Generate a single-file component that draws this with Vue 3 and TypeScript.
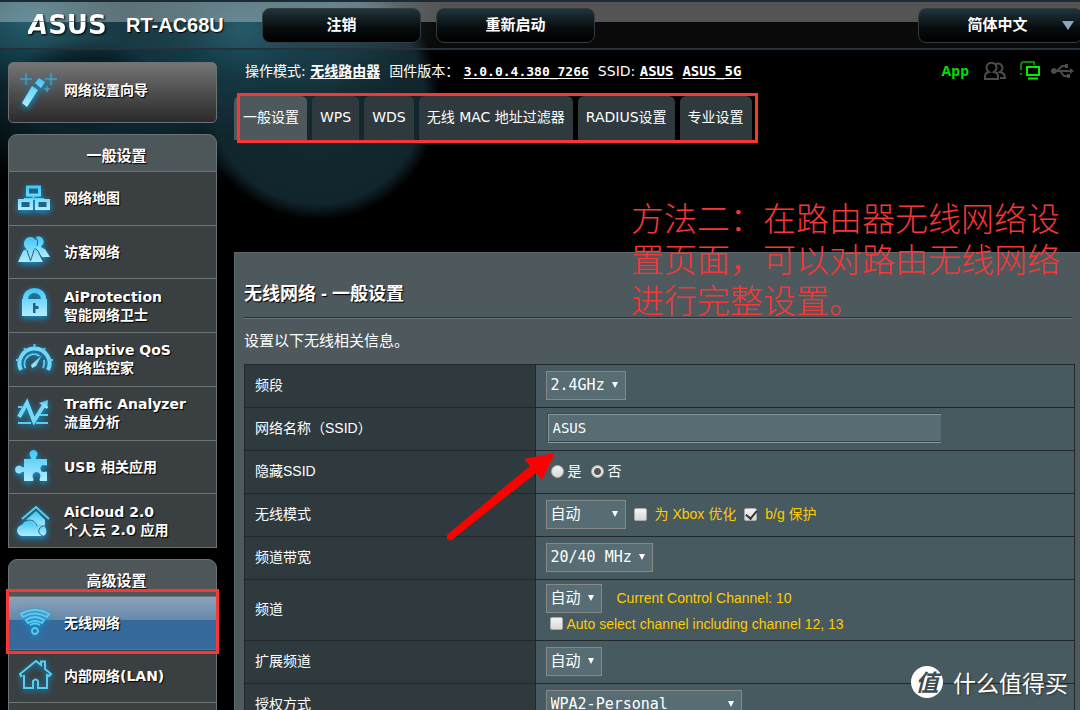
<script setup lang="ts">
import { ref } from 'vue'

interface Shape {
  d: string
  kind: 'fill' | 'line' | 'bold' | 'dark' | 'thin' | 'spark'
}
interface MenuItem {
  icon: string
  lines: string[]
  active?: boolean
}

const icons: Record<string, Shape[]> = {
  map: [
    { d: 'M17.500 16v4M9 22v-3h18v3', kind: 'line' },
    { d: 'M10 5.500h15v11h-15zM2 19h15v11H2zM19 19h15v11H19z', kind: 'fill' },
    { d: 'M13 8.500h9v5h-9zM5.500 22h8v5h-8zM22.500 22h8v5h-8z', kind: 'dark' },
  ],
  guests: [
    { d: 'M20 3a5 5 0 1 1 5 9l1 2 3 1 5 8h-8l-5-7-2-2z', kind: 'fill' },
    { d: 'M14.500 3a6.500 6.500 0 0 1 3 12l4 1.500L27 28H2l5-11 4-2a6.500 6.500 0 0 1 3.500-12z', kind: 'fill' },
    { d: 'M11 16l3.500 11L18 16M20 15l2 2 5 10M20 4q3 3 1 8', kind: 'thin' },
  ],
  lock: [
    { d: 'M6 11h1v-1a11.500 10 0 0 1 23 0v1h1v17H6zM12 11h13a6.500 6 0 0 0-13 0z', kind: 'fill' },
    { d: 'M17 15h2.500v3h3v3h-3v4H17z', kind: 'dark' },
  ],
  gauge: [
    { d: 'M5 29a15 15 0 1 1 27 0', kind: 'bold' },
    { d: 'M18.500 3v4M8 7l2 3M29 7l-2 3M0 19h4M37 19h-4', kind: 'line' },
    { d: 'M9.500 27a9.500 9.500 0 0 1 14-12M28 19q1 4-1 8', kind: 'line' },
    { d: 'M26 14L15 24l1 3 4-2z', kind: 'fill' },
  ],
  traffic: [
    { d: 'M2 28h13M20 28h12M2 20h3M23 20h9M2 12h4M27 12h5', kind: 'line' },
    { d: 'M3 22L11 8l7 18 10-16', kind: 'bold' },
    { d: 'M23 8l9-3-1 9z', kind: 'fill' },
  ],
  puzzle: [
    { d: 'M8 10h7q1-1-1-3a4 4 0 1 1 7 0q-2 2-1 3h11v6q-1 1-3 0a3.500 3.500 0 0 0 0 7q2-1 3 0v9h-7q-1-1 0-3a4 4 0 1 0-7 0q1 2 0 3H8v-9q-1-1-3 1a4 4 0 1 1 0-7q2 2 3 1z', kind: 'fill' },
  ],
  cloud: [
    { d: 'M6 16L20 4l13 12', kind: 'line' },
    { d: 'M10 17L20 8l9 9v9H10z', kind: 'fill' },
    { d: 'M7 33a5.500 5.500 0 0 1-1-11 6 6 0 0 1 6-4c4 0 7 2 8 5a5 5 0 1 1 8 10z', kind: 'fill' },
    { d: 'M6 21q2-4 7-4 6 0 8 6M31 24a5 5 0 1 0 0 8', kind: 'thin' },
  ],
  wifi: [
    { d: 'M5 9q14-8 28 0l-2 3q-12-7-24 0zM10 15q9-6 18 0l-2 3q-7-4-14 0z', kind: 'line' },
    { d: 'M14 20q5-3 10 0M19 23a3 3 0 1 1-.1 0z', kind: 'line' },
  ],
  house: [
    { d: 'M6 17l-1 1-1-2L20 3l5 4V3.500h4V11l6 5-2 2-2-1v13h-9v-7q-2-3-5 0v7H8V17', kind: 'line' },
  ],
  wand: [
    { d: 'M5 34l10-17 6 4-11 17zM18 14l4-5 6 4-4 6z', kind: 'fill' },
    { d: 'M9 4v12M3 10h12M34 4v12M28 10h12M30 17v6M27 20h6', kind: 'spark' },
  ],
}

const general: MenuItem[] = [
  { icon: 'map', lines: ['网络地图'] },
  { icon: 'guests', lines: ['访客网络'] },
  { icon: 'lock', lines: ['AiProtection', '智能网络卫士'] },
  { icon: 'gauge', lines: ['Adaptive QoS', '网络监控家'] },
  { icon: 'traffic', lines: ['Traffic Analyzer', '流量分析'] },
  { icon: 'puzzle', lines: ['USB 相关应用'] },
  { icon: 'cloud', lines: ['AiCloud 2.0', '个人云 2.0 应用'] },
]
const advanced: MenuItem[] = [
  { icon: 'wifi', lines: ['无线网络'], active: true },
  { icon: 'house', lines: ['内部网络(LAN)'] },
]
const groups = [
  { title: '一般设置', items: general, even: true },
  { title: '高级设置', items: advanced, even: false },
]
const tabs = ['一般设置', 'WPS', 'WDS', '无线 MAC 地址过滤器', 'RADIUS设置', '专业设置']

const ssid = ref('ASUS')
const hidden = ref('no')
const xbox = ref(false)
const protect = ref(true)
const autoChannel = ref(false)
</script>

<template>
  <div class="page">
    <header class="top">
      <div class="logo"><i>A</i>SUS</div>
      <h1 class="model">RT-AC68U</h1>
      <button class="top-btn" type="button">注销</button>
      <button class="top-btn" type="button">重新启动</button>
      <span class="lang">
        <select class="top-btn" aria-label="语言"><option>简体中文</option></select>
      </span>
    </header>

    <div class="body">
      <aside class="side">
        <button class="wizard" type="button">
          <svg class="icon wand" viewBox="0 0 42 42">
            <path v-for="(s, i) in icons.wand" :key="i" :d="s.d" :class="s.kind" />
          </svg>
          <span>网络设置向导</span>
        </button>
        <nav v-for="g in groups" :key="g.title" class="group">
          <h2>{{ g.title }}</h2>
          <ul :class="{ even: g.even }">
            <li v-for="m in g.items" :key="m.icon" :class="{ active: m.active }">
              <a href="#">
                <svg class="icon" viewBox="0 0 36 36">
                  <path v-for="(s, i) in icons[m.icon]" :key="i" :d="s.d" :class="s.kind" />
                </svg>
                <span><template v-for="(l, i) in m.lines" :key="l"><br v-if="i" />{{ l }}</template></span>
              </a>
            </li>
            <li v-if="!g.even"></li>
          </ul>
        </nav>
        <svg width="0" height="0" class="defs">
          <linearGradient id="glow" x1="0" y1="0" x2="0" y2="1">
            <stop offset="0" stop-color="#3fc8f5" />
            <stop offset="1" stop-color="#b4ecff" />
          </linearGradient>
        </svg>
      </aside>

      <main class="main">
        <div class="info">
          <span>操作模式: <a href="#" class="big">无线路由器</a></span>
          <span>固件版本： <a href="#">3.0.0.4.380_7266</a></span>
          <span>SSID: <a href="#" class="big">ASUS</a></span>
          <a href="#" class="big">ASUS_5G</a>
          <div class="status">
            <b>App</b>
            <svg width="22" height="18" viewBox="0 0 22 18">
              <path d="M1 17v-3q0-3 4-4a5 5 0 1 1 5 0q4 1 4 4v3zM12 2a4 4 0 1 1 4 8q5 1 5 6h-5" />
            </svg>
            <svg width="21" height="19" viewBox="0 0 21 19" class="screens">
              <path class="back" d="M1 14v-2M1 9V4q0-3 3-3h10v3" />
              <path d="M7 6h12v8H7zM8 17.500h10" />
            </svg>
            <svg width="23" height="16" viewBox="0 0 23 16" class="usb">
              <path d="M3 8h17M6 8l5-5h4M9 8l4 5h4" />
              <path class="solid" d="M3 5a3 3 0 1 1-.1 0zM19 5l4 3-4 3zM14 1h3v4h-3zM16 11h3v4h-3z" />
            </svg>
          </div>
        </div>

        <nav class="tabs">
          <a v-for="(t, i) in tabs" :key="t" href="#" :class="{ on: i === 0 }">{{ t }}</a>
        </nav>

        <section class="panel">
          <h2>无线网络 - 一般设置</h2>
          <p>设置以下无线相关信息。</p>
          <table>
            <tbody>
              <tr>
                <th><label for="band">频段</label></th>
                <td><span class="sel"><select id="band"><option>2.4GHz</option></select></span></td>
              </tr>
              <tr>
                <th><label for="ssid">网络名称（SSID）</label></th>
                <td><input id="ssid" v-model="ssid" class="text" type="text" /></td>
              </tr>
              <tr>
                <th>隐藏SSID</th>
                <td>
                  <div class="line radios">
                    <label><input v-model="hidden" type="radio" name="hide" value="yes" />是</label>
                    <label><input v-model="hidden" type="radio" name="hide" value="no" />否</label>
                  </div>
                </td>
              </tr>
              <tr>
                <th><label for="mode">无线模式</label></th>
                <td>
                  <div class="line">
                    <span class="sel mid"><select id="mode"><option>自动</option></select></span>
                    <label class="hint wide"><input v-model="xbox" type="checkbox" />为 Xbox 优化</label>
                    <label class="hint wide"><input v-model="protect" type="checkbox" />b/g 保护</label>
                  </div>
                </td>
              </tr>
              <tr>
                <th><label for="width">频道带宽</label></th>
                <td><span class="sel"><select id="width"><option>20/40 MHz</option></select></span></td>
              </tr>
              <tr class="tall">
                <th><label for="channel">频道</label></th>
                <td>
                  <div class="line">
                    <span class="sel"><select id="channel"><option>自动</option></select></span>
                    <span class="hint current">Current Control Channel: 10</span>
                  </div>
                  <label class="hint auto"><input v-model="autoChannel" type="checkbox" />Auto select channel including channel 12, 13</label>
                </td>
              </tr>
              <tr>
                <th><label for="ext">扩展频道</label></th>
                <td><span class="sel"><select id="ext"><option>自动</option></select></span></td>
              </tr>
              <tr>
                <th><label for="auth">授权方式</label></th>
                <td><span class="sel long"><select id="auth"><option>WPA2-Personal</option></select></span></td>
              </tr>
            </tbody>
          </table>
        </section>

        <svg class="arrow" width="114" height="92" viewBox="0 0 114 92">
          <path d="M111 3L80 9l6 7L4 84q-3 4 1 6 3 1 5-2L92 23l6 7z" />
        </svg>
        <div class="note">方法二：在路由器无线网络设<br />置页面，可以对路由无线网络<br />进行完整设置。</div>
      </main>
    </div>

    <div class="mark"><span class="disc">值</span>什么值得买</div>
  </div>
</template>

<style>
html,
body {
  background: #000;
}
</style>

<style scoped>
* {
  box-sizing: border-box;
}
.page {
  position: relative;
  height: 100vh;
  overflow: hidden;
  color: #fff;
  font: 14px/18px "DejaVu Sans", "Noto Sans CJK SC", sans-serif;
  background:
    radial-gradient(circle at 90px 30px, rgba(4, 12, 18, 0) 0, rgba(4, 12, 18, 0) 1px, transparent 2px),
    radial-gradient(ellipse at 85px 85px, rgba(3, 10, 14, 0.7) 0, rgba(3, 10, 14, 0.5) 45px, transparent 75px),
    radial-gradient(ellipse at 240px 30px, rgba(30, 88, 104, 0.9) 0, rgba(24, 72, 86, 0.5) 60px, transparent 130px),
    radial-gradient(ellipse at 330px 0, rgba(34, 80, 94, 0.8) 0, transparent 110px),
    radial-gradient(ellipse at 30px 20px, #1a5868 0, transparent 100px),
    radial-gradient(circle at 318px 98px, #13292f 0, #11252d 106px, transparent 122px),
    radial-gradient(ellipse at 120px 60px, #0f323d 0, #0c232b 120px, transparent 210px),
    #000;
}
a {
  color: inherit;
}
h1,
h2,
p,
ul {
  margin: 0;
  padding: 0;
}
button,
select,
input {
  font: inherit;
  color: inherit;
  margin: 0;
}
select {
  appearance: none;
}

.top {
  display: flex;
  align-items: center;
  height: 50px;
  padding-left: 28px;
  border-top: 2px solid #1b2a35;
  border-bottom: 2px solid #27313a;
  background: linear-gradient(rgba(255, 255, 255, 0.33) 0 20px, rgba(255, 255, 255, 0.04) 20px);
}
.logo {
  width: 80px;
  font: bold 26px/26px "DejaVu Sans", sans-serif;
  color: transparent;
  background: linear-gradient(#fff 0 9px, #8a9aa0 9px 10px, #fff 10px);
  background-clip: text;
  filter: drop-shadow(1px 1px 1px #000);
}
.model {
  width: 136px;
  margin-left: 18px;
  font: bold 20px/26px "Liberation Sans", sans-serif;
  text-shadow: 1px 1px 1px #000;
}
.top-btn {
  width: 159px;
  height: 35px;
  margin-right: 15px;
  padding: 0;
  border: 1px solid #343c3f;
  border-radius: 8px;
  background: linear-gradient(#20343b, #060b0d 60%, #000);
  font-size: 15px;
  font-weight: bold;
  text-align: center;
  text-align-last: center;
}
.lang {
  display: grid;
  align-items: center;
  margin-left: auto;
  margin-right: -3px;
}
.lang .top-btn {
  grid-area: 1 / 1;
  width: 165px;
  margin: 0;
  padding-right: 6px;
}
.lang::after {
  content: "";
  grid-area: 1 / 1;
  justify-self: end;
  margin-right: 9px;
  border: 6px solid transparent;
  border-top: 9px solid #8fa5b8;
  border-bottom: 0;
  pointer-events: none;
}

.body {
  display: flex;
  padding-left: 8px;
}
.side {
  flex: none;
  width: 209px;
  margin-right: 17px;
  padding-top: 12px;
  font-weight: bold;
  text-shadow: 1px 1px 1px #000;
}
.defs {
  position: absolute;
}
.wizard {
  display: flex;
  align-items: center;
  gap: 5px;
  width: 100%;
  height: 61px;
  padding: 0 8px 5px;
  border: 1px solid #6b7072;
  border-radius: 5px;
  background: linear-gradient(#757575, #4a4a4a 55%, #2b2b2b);
  font-weight: bold;
  text-shadow: inherit;
}
.icon {
  flex: none;
  width: 36px;
  height: 36px;
  overflow: visible;
  filter: drop-shadow(0 2px 3px #0a9ade);
}
.wand {
  width: 42px;
  height: 42px;
}
.icon path {
  fill: none;
}
.icon .fill {
  fill: url(#glow);
  fill-rule: evenodd;
}
.icon .line {
  stroke: #58cdf2;
  stroke-width: 2;
}
.icon .bold {
  stroke: #74d8f8;
  stroke-width: 4;
}
.icon .spark {
  stroke: #3eb6de;
  stroke-width: 1;
}
.icon .dark {
  fill: #1f6384;
}
.icon .thin {
  stroke: #2b5f78;
  stroke-width: 1;
}
.group {
  margin-top: 11px;
}
.group h2 {
  height: 38px;
  padding: 4px 0 0 8px;
  border: 1px solid #6b7375;
  border-radius: 9px 9px 0 0;
  background: #4d5659;
  font-size: 15px;
  line-height: 34px;
  text-align: center;
}
.group ul {
  display: grid;
  grid-auto-rows: 53px;
  list-style: none;
  border: solid #6b7375;
  border-width: 0 1px;
}
.group ul.even {
  height: 376px;
  grid-auto-rows: 1fr;
}
.group li {
  position: relative;
  border-bottom: 1px solid #6b7375;
  background: #3a3f41;
}
.group li a {
  display: flex;
  align-items: center;
  gap: 12px;
  height: 100%;
  padding-left: 7px;
  text-decoration: none;
}
.group li.active {
  background: linear-gradient(#8ba3bc, #6688a8 45%, #36699b 45%, #376a9c);
}
.group li.active::after {
  content: "";
  position: absolute;
  inset: -8px -3px -5px -3px;
  border: 3px solid #f83636;
  z-index: 1;
}

.main {
  position: relative;
  flex: 1;
  min-width: 0;
}
.info {
  display: flex;
  align-items: baseline;
  gap: 9px;
  height: 46px;
  padding: 11px 6px 0 11px;
  white-space: nowrap;
}
.info a {
  font: bold 13px/16px "DejaVu Sans Mono", "Noto Sans CJK SC", monospace;
  text-underline-offset: 2px;
}
.info a.big {
  font-size: 14px;
}
.status {
  display: flex;
  align-items: center;
  gap: 14px;
  margin-left: auto;
}
.status b {
  margin-right: 1px;
  color: #0d0;
  font-family: "Noto Sans", sans-serif;
}
.status path {
  fill: none;
  stroke: #4b4b4b;
  stroke-width: 2;
}
.status .screens path {
  stroke: #0e0;
}
.status .screens .back {
  stroke: #0a840a;
}
.status .usb {
  margin-left: -4px;
}
.status .usb .solid {
  fill: #4b4b4b;
  stroke: none;
}

.tabs {
  position: relative;
  display: flex;
  gap: 5px;
  width: max-content;
}
.tabs::after {
  content: "";
  position: absolute;
  inset: -3px -6px -3px 3px;
  border: 3px solid #f83636;
  pointer-events: none;
}
.tabs a {
  height: 44px;
  padding: 0 8px;
  border-radius: 6px 6px 0 0;
  background: #2f3a3e;
  line-height: 43px;
  text-decoration: none;
  white-space: nowrap;
}
.tabs a.on {
  padding-left: 9px;
  background: #4d595d;
}

.panel {
  margin-top: 112px;
  padding: 27px 5px 0 9px;
  border: solid #5d686c;
  border-width: 1px 0 0 1px;
  background: #4d595d;
}
.panel h2 {
  height: 38px;
  margin-right: 3px;
  border-bottom: 1px solid #293235;
  box-shadow: 0 1px #66757c;
  font: bold 18px/28px "Liberation Sans", "Noto Sans CJK SC", sans-serif;
  text-shadow: 1px 1px 1px #000;
}
.panel p {
  padding: 11px 0;
  font-size: 15px;
  line-height: 24px;
}
table {
  width: 100%;
  border-collapse: collapse;
  table-layout: fixed;
}
tr {
  height: 43px;
}
tr.tall {
  height: 61px;
}
th,
td {
  padding: 0 10px 2px;
  border: 1px solid #20282b;
  background: #475a5f;
}
th {
  width: 35%;
  background: #2f3a3e;
  font-family: "Liberation Sans", "Noto Sans CJK SC", sans-serif;
  font-weight: normal;
  text-align: left;
}
.sel {
  display: inline-grid;
  align-items: center;
  vertical-align: middle;
}
.sel select {
  grid-area: 1 / 1;
  height: 29px;
  padding: 0 19px 0 4px;
  border: 1px solid #888;
  border-radius: 0;
  background: #576d73;
  font: 15px/27px "DejaVu Sans Mono", "Noto Sans CJK SC", monospace;
}
.sel::after {
  content: "";
  grid-area: 1 / 1;
  justify-self: end;
  margin-right: 8px;
  border: 3px solid transparent;
  border-top: 6px solid #fff;
  border-bottom: 0;
  pointer-events: none;
}
.sel.mid {
  width: 80px;
}
.sel.long {
  width: 196px;
}
.text {
  display: block;
  width: 76%;
  height: 30px;
  margin-left: 1px;
  padding: 0 4px;
  border: 2px groove #8a979b;
  border-right: 0;
  background: #576d73;
  font: 14px/26px "DejaVu Sans Mono", monospace;
}
.line,
.line label,
.auto {
  display: flex;
  align-items: center;
}
.radios {
  gap: 9px;
  padding-left: 5px;
}
.radios label {
  gap: 4px;
}
input[type="radio"],
input[type="checkbox"] {
  appearance: none;
  flex: none;
  width: 13px;
  height: 13px;
  border: 1px solid #aaa;
  border-radius: 2px;
  background: linear-gradient(#f4f4f4, #d8d8d8);
}
input[type="radio"] {
  border-radius: 50%;
}
input[type="radio"]:checked {
  background: radial-gradient(circle, #555 0 3px, #e4e4e4 4px);
}
input[type="checkbox"]:checked::after {
  content: "";
  display: block;
  width: 5px;
  height: 9px;
  margin: -1px 0 0 3px;
  border: solid #333;
  border-width: 0 2px 2px 0;
  transform: rotate(40deg);
}
.hint {
  color: #fc0;
  font-family: "Liberation Sans", "Noto Sans CJK SC", sans-serif;
}
.hint.wide {
  gap: 8px;
  margin-left: 8px;
}
.hint.current {
  margin-left: 15px;
}
.hint.auto {
  gap: 4px;
  height: 22px;
  padding-left: 4px;
}

.arrow {
  position: absolute;
  left: 210px;
  top: 400px;
}
.arrow path {
  fill: #f00;
}
.note {
  position: absolute;
  right: 20px;
  top: 147px;
  color: #f83636;
  font: 300 33px/41px "Noto Sans CJK SC", sans-serif;
  white-space: nowrap;
}
.mark {
  position: absolute;
  right: 12px;
  bottom: 11px;
  display: flex;
  align-items: center;
  gap: 10px;
  font: 23px/34px "Noto Sans CJK SC", sans-serif;
  text-shadow: 1px 1px 2px #333;
}
.disc {
  width: 32px;
  height: 32px;
  border-radius: 50%;
  background: #fff;
  color: #3d4c50;
  font-size: 23px;
  font-weight: bold;
  font-style: italic;
  line-height: 30px;
  text-align: center;
  text-shadow: none;
}
</style>
